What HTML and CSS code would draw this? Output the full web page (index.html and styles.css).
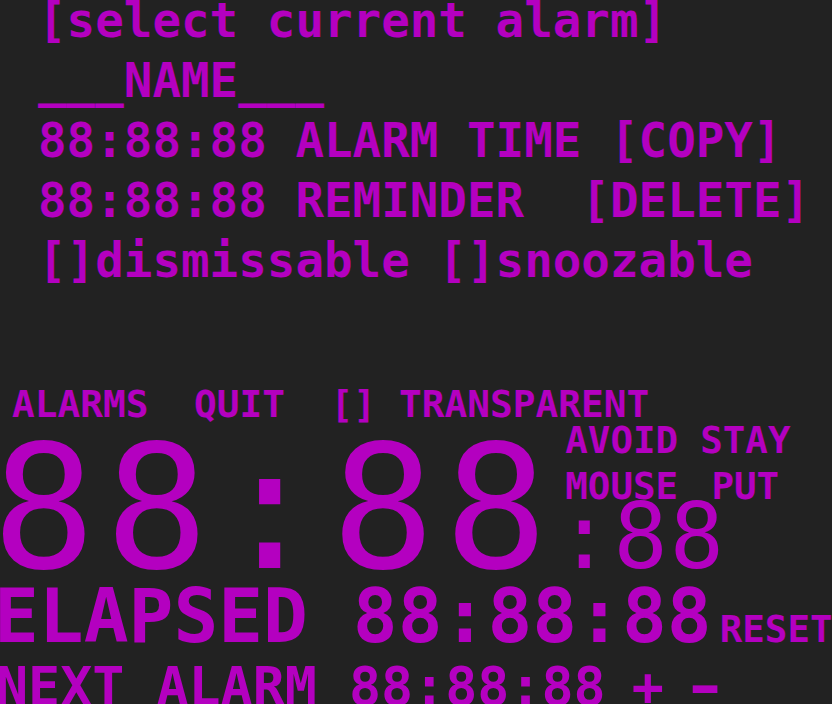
FILE: index.html
```html
<!DOCTYPE html>
<html>
<head>
<meta charset="utf-8">
<link rel="stylesheet" href="styles.css">
</head>
<body>
<div class="app">
  <div class="editor">
    <div class="line">[select current alarm]</div>
    <div class="line">___NAME___</div>
    <div class="line">88:88:88 ALARM TIME [COPY]</div>
    <div class="line">88:88:88 REMINDER  [DELETE]</div>
    <div class="line">[]dismissable []snoozable</div>
  </div>
  <div class="toolbar"><span>ALARMS</span>  <span>QUIT</span>  <span>[] TRANSPARENT</span></div>
  <div class="clock-row">
    <div class="big">88:88</div>
    <div class="side">
      <div class="opts">
        <div class="opt">AVOID<br>MOUSE</div>
        <div class="opt">STAY<br>PUT</div>
      </div>
      <div class="secs">:88</div>
    </div>
  </div>
  <div class="elapsed-row">
    <div class="elapsed">ELAPSED 88:88:88</div>
    <div class="reset">RESET</div>
  </div>
  <div class="next"><span>NEXT ALARM 88:88:88</span><span class="plus">+</span><span class="minus">-</span></div>
</div>
</body>
</html>
```
FILE: styles.css
```css
html, body {
  margin: 0;
  padding: 0;
  background: #222222;
  overflow: hidden;
}
.app {
  width: 832px;
  height: 704px;
  overflow: hidden;
  color: #b400c0;
  font-family: "DejaVu Sans Mono", "Liberation Mono", monospace;
  font-weight: bold;
}
.editor {
  margin-top: -9px;
  padding-left: 38px;
  font-size: 47.5px;
  line-height: 60px;
}
.line {
  white-space: pre;
}
.toolbar {
  margin-top: 100px;
  padding-left: 12px;
  font-size: 37.8px;
  line-height: 26px;
  white-space: pre;
}
.clock-row {
  display: flex;
  align-items: flex-start;
}
.big {
  margin-left: -8px;
  font-size: 172px;
  letter-spacing: 9.5px;
  line-height: 183px;
  font-weight: normal;
  white-space: pre;
}
.side {
  display: flex;
  flex-direction: column;
  margin-left: -2px;
}
.opts {
  display: flex;
  gap: 22px;
  padding-left: 10px;
  font-size: 37.5px;
  line-height: 46px;
}
.opt {
  text-align: center;
}
.secs {
  font-size: 90px;
  letter-spacing: 2px;
  line-height: 55px;
  font-weight: normal;
  padding-left: 2px;
}
.elapsed-row {
  display: flex;
  align-items: baseline;
  gap: 8px;
}
.elapsed {
  margin-left: -6px;
  font-size: 74.5px;
  line-height: 34px;
  white-space: pre;
}
.reset {
  font-size: 37.5px;
  line-height: 26px;
}
.next {
  margin-left: -4px;
  font-size: 53.3px;
  line-height: 91px;
  white-space: pre;
}
.plus {
  margin-left: 26px;
}
.minus {
  display: inline-block;
  margin-left: 25px;
  transform: scaleX(1.5);
}
```
